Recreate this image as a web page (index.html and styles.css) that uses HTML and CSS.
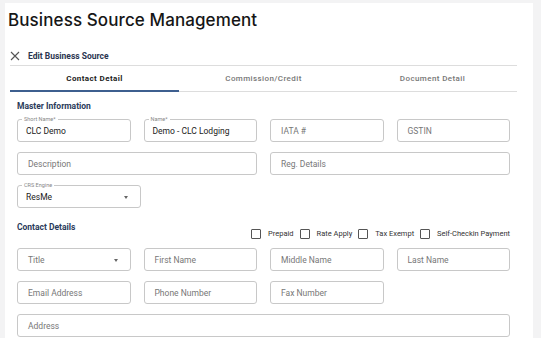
FILE: index.html
```html
<!DOCTYPE html>
<html lang="en">
<head>
    <meta charset="UTF-8">
    <meta name="viewport" content="width=device-width, initial-scale=1.0">
	<link rel="stylesheet" href="styles.css">
</head>
<body>
	<div class="page">
		<h1 class="title">Business Source Management</h1>
		<div class="edit-bar">
			<svg class="close" width="10" height="10" viewBox="0 0 10 10"><path d="M1 1L9 9M9 1L1 9" stroke="#555" stroke-width="1.1" fill="none"/></svg>
			<span>Edit Business Source</span>
		</div>
		<div class="tabs">
			<div class="tab active">Contact Detail</div>
			<div class="tab">Commission/Credit</div>
			<div class="tab">Document Detail</div>
		</div>
		<div class="form">
			<div class="section">Master Information</div>
			<div class="row cols-4">
				<div class="field filled"><label>Short Name*</label><span>CLC Demo</span></div>
				<div class="field filled"><label>Name*</label><span>Demo - CLC Lodging</span></div>
				<div class="field">IATA #</div>
				<div class="field">GSTIN</div>
			</div>
			<div class="row cols-2">
				<div class="field">Description</div>
				<div class="field">Reg. Details</div>
			</div>
			<div class="row">
				<div class="field filled select crs"><label>CRS Engine</label><span>ResMe</span><i class="caret"></i></div>
			</div>
			<div class="contact-head">
				<div class="section">Contact Details</div>
				<div class="checks">
					<label class="check"><i></i>Prepaid</label>
					<label class="check"><i></i>Rate Apply</label>
					<label class="check"><i></i>Tax Exempt</label>
					<label class="check"><i></i>Self-Checkin Payment</label>
				</div>
			</div>
			<div class="row cols-4">
				<div class="field select">Title<i class="caret"></i></div>
				<div class="field">First Name</div>
				<div class="field">Middle Name</div>
				<div class="field">Last Name</div>
			</div>
			<div class="row cols-4">
				<div class="field">Email Address</div>
				<div class="field">Phone Number</div>
				<div class="field">Fax Number</div>
			</div>
			<div class="row">
				<div class="field wide">Address</div>
			</div>
		</div>
	</div>
</body>
</html>
```

FILE: styles.css
```css
html, body {
	margin: 0;
	padding: 0;
	background: #f3f3f4;
	height: 100%;
	overflow: hidden;
}
.page {
	margin: 3px 8px 0 5px;
	background: #fff;
	height: 100%;
	padding: 0 16px 0 5px;
	font-family: Roboto, sans-serif;
}
.title {
	margin: 0 0 0 -2px;
	padding: 6px 0 0 0;
	height: 25px;
	font-family: Inter, sans-serif;
	font-weight: 500;
	font-size: 17px;
	line-height: 22px;
	color: #161616;
	letter-spacing: 0.1px;
}
.edit-bar {
	display: flex;
	align-items: center;
	height: 18px;
	padding-top: 13px;
	border-bottom: 1px solid #ddd;
	font-size: 8.5px;
	font-weight: 700;
	color: #2a3550;
}
.close {
	margin-right: 8px;
}
.tabs {
	display: flex;
	height: 25px;
	border-bottom: 1px solid #ddd;
}
.tab {
	flex: 1;
	display: flex;
	align-items: center;
	justify-content: center;
	font-size: 8px;
	letter-spacing: 0.4px;
	color: #777;
	font-weight: 500;
}
.tab.active {
	color: #222;
	font-weight: 700;
	border-bottom: 2px solid #3e5f8f;
	margin-bottom: -1px;
}
.form {
	padding: 0 7px 0 7px;
}
.section {
	font-size: 8.5px;
	line-height: 11px;
	font-weight: 700;
	color: #2a3a5a;
	padding: 9px 0 7px;
}
.row {
	display: grid;
	grid-template-columns: 1fr;
	gap: 13px;
	margin-top: 10px;
}
.section + .row,
.contact-head + .row {
	margin-top: 0;
}
.cols-4 {
	grid-template-columns: repeat(4, 1fr);
}
.cols-2 {
	grid-template-columns: 1fr 1fr;
}
.field {
	position: relative;
	height: 23px;
	box-sizing: border-box;
	border: 1px solid #c8c8c8;
	border-radius: 3px;
	display: flex;
	align-items: center;
	padding: 0 10px;
	font-size: 8.5px;
	color: #777;
}
.field.filled span {
	color: #222;
	margin-left: -2px;
}
.field label {
	position: absolute;
	top: -4px;
	left: 4px;
	background: #fff;
	padding: 0 2px;
	font-size: 5.5px;
	line-height: 7px;
	color: #888;
}
.crs {
	width: 124px;
}
.caret {
	position: absolute;
	right: 12px;
	top: 10px;
	border-left: 2.5px solid transparent;
	border-right: 2.5px solid transparent;
	border-top: 3px solid #666;
}
.contact-head {
	display: flex;
	justify-content: space-between;
	align-items: flex-start;
}
.contact-head .section {
	padding-top: 14px;
}
.checks {
	display: flex;
	align-items: center;
	margin-top: 21px;
	margin-bottom: 9px;
	font-size: 7.5px;
	line-height: 10px;
	color: #333;
}
.check {
	display: flex;
	align-items: center;
	margin-left: 6px;
}
.check i {
	width: 8px;
	height: 8px;
	border: 1px solid #555;
	border-radius: 1px;
	margin-right: 7px;
}
.check:first-child {
	margin-left: 0;
}
```
